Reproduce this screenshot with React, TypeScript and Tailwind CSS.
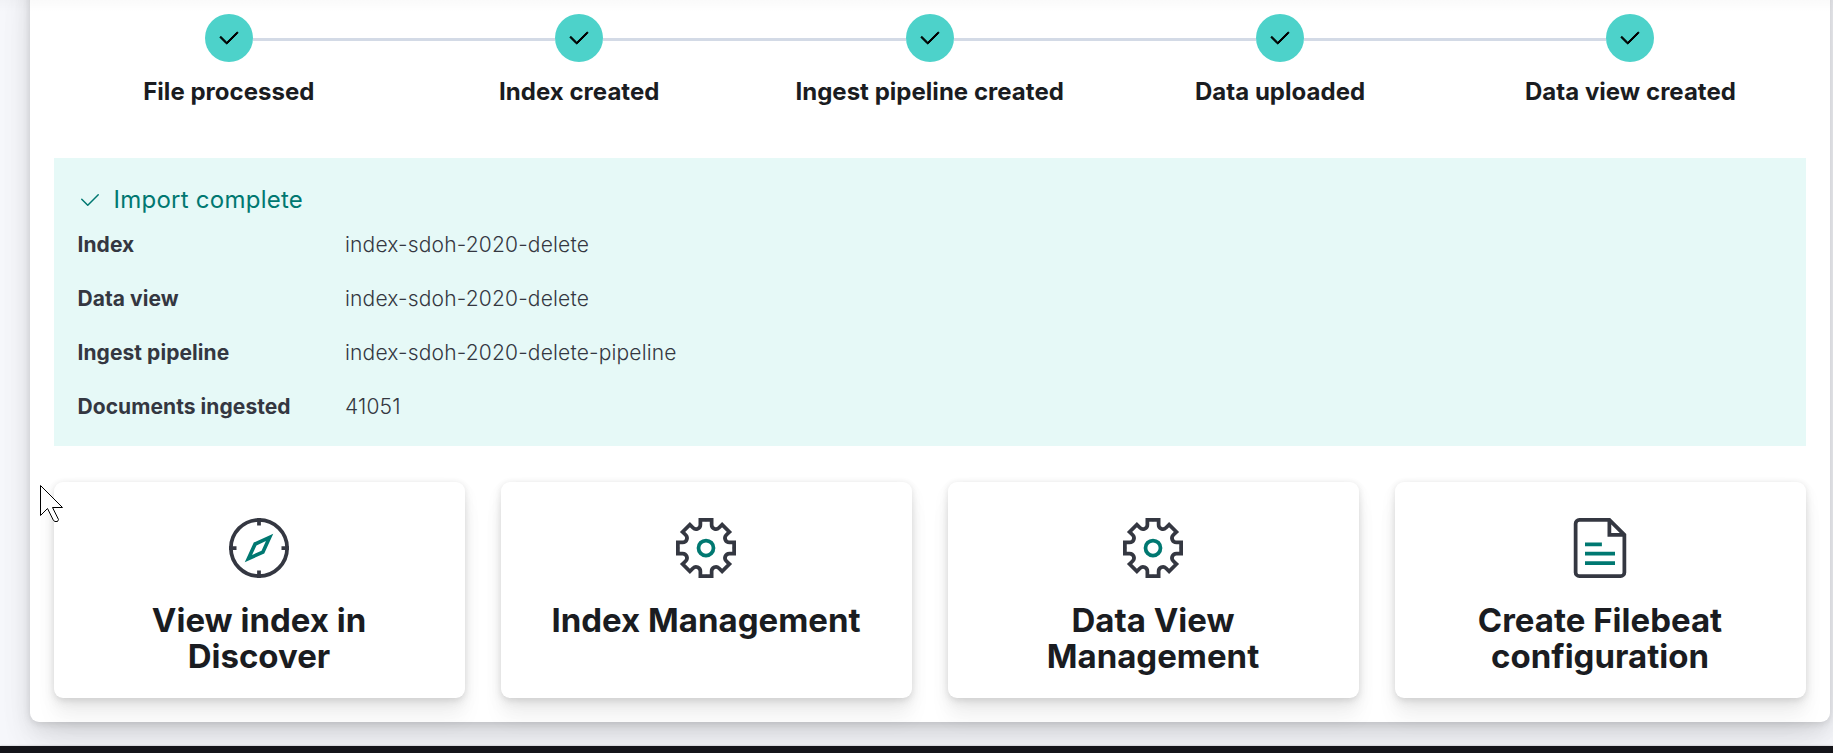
import React from "react";

const steps = ["File processed", "Index created", "Ingest pipeline created", "Data uploaded", "Data view created"];

const results = [
  ["Index", "index-sdoh-2020-delete"],
  ["Data view", "index-sdoh-2020-delete"],
  ["Ingest pipeline", "index-sdoh-2020-delete-pipeline"],
  ["Documents ingested", "41051"],
];

function Check({ bold = false }: { bold?: boolean }) {
  return (
    <svg className="size-6 shrink-0" viewBox="0 0 16 16" fill="currentColor" stroke={bold ? "currentColor" : "none"} strokeWidth="0.65">
      <path d="M6.5 12a.502.502 0 0 1-.354-.146l-4-4a.502.502 0 0 1 .708-.708L6.5 10.793l6.646-6.647a.502.502 0 0 1 .708.708l-7 7A.502.502 0 0 1 6.5 12" />
    </svg>
  );
}

function Compass() {
  return (
    <svg className="size-[60px]" viewBox="0 0 32 32" fill="none">
      <circle cx="16" cy="16" r="15" stroke="#343741" strokeWidth="2" />
      <path d="M16 0v4M16 28v4M0 16h4M28 16h4" stroke="#343741" strokeWidth="2" />
      <path
        fill="#007871"
        fillRule="evenodd"
        d="M23.6 8.4 13.2 13.1 8.4 23.6 18.8 18.9ZM19.7 12.3 14.65 14.6 12.3 19.7 17.35 17.4Z"
      />
    </svg>
  );
}

function Gear() {
  const quarter = "M16.1 1H13V3.55A2.3 2.3 0 0 1 9.07 5.18L7.4 3.5 3.5 7.4 5.18 9.07A2.3 2.3 0 0 1 3.55 13H1V16.1";
  return (
    <svg className="size-[60px]" viewBox="0 0 32 32" fill="none" strokeWidth="2">
      {[0, 90, 180, 270].map((angle) => (
        <path key={angle} d={quarter} stroke="#343741" transform={`rotate(${angle} 16 16)`} />
      ))}
      <circle cx="16" cy="16" r="4" stroke="#007871" />
    </svg>
  );
}

function Document() {
  return (
    <svg className="size-[60px]" viewBox="0 0 32 32" fill="none" strokeWidth="2">
      <path d="M21 1H5a2 2 0 0 0-2 2v26a2 2 0 0 0 2 2h22a2 2 0 0 0 2-2V9L21 1v8h8" stroke="#343741" />
      <path d="M8 14h9M8 19h16M8 24h16" stroke="#007871" />
    </svg>
  );
}

const cards = [
  { title: "View index in Discover", icon: <Compass /> },
  { title: "Index Management", icon: <Gear /> },
  { title: "Data View Management", icon: <Gear /> },
  { title: "Create Filebeat configuration", icon: <Document /> },
];

export default function App() {
  return (
    <div className="relative flex h-[753px] w-[1833px] flex-col overflow-hidden bg-[#f7f8fc] font-['Inter',sans-serif] text-[#343741]">
      <main className="-mt-12 ml-[30px] flex h-[770px] w-[1800px] shrink-0 flex-col rounded-[9px] bg-white px-6 pt-[62px] shadow-[0_1.5px_7.5px_rgba(0,0,0,0.1),0_5.4px_19.5px_rgba(0,0,0,0.07),0_12.6px_34.5px_rgba(0,0,0,0.06),0_34.5px_52.5px_rgba(0,0,0,0.05)]">
        <ol className="mr-[0.35px] -ml-[0.35px] grid h-[144px] grid-cols-5">
          {steps.map((step, i) => (
            <li key={step} className="flex flex-col items-center">
              <div className="flex w-full items-center">
                <span className={i === 0 ? "mt-[3px] h-[3px] flex-1" : "mt-[3px] h-[3px] flex-1 bg-[#d3dae6]"} />
                <span className="flex size-12 items-center justify-center rounded-full bg-[#4dd2ca] text-black">
                  <Check bold />
                </span>
                <span className={i === steps.length - 1 ? "mt-[3px] h-[3px] flex-1" : "mt-[3px] h-[3px] flex-1 bg-[#d3dae6]"} />
              </div>
              <p className="mt-3 text-2xl leading-9 font-bold tracking-[0.03px] whitespace-nowrap text-[#1a1c21]">{step}</p>
            </li>
          ))}
        </ol>

        <section className="h-72 bg-[#e6f9f7] p-6">
          <h2 className="flex items-center gap-[11.5px] text-2xl leading-9 tracking-[0.25px] text-[#007871]">
            <Check />
            Import complete
          </h2>
          <dl className="mt-3 grid grid-cols-[267px_1fr] gap-y-6 text-[21px] leading-[30px]">
            {results.map(([label, value]) => (
              <React.Fragment key={label}>
                <dt className="-ml-[0.5px] font-bold tracking-[0.06px]">{label}</dt>
                <dd className="font-light tracking-[0.17px]">{value}</dd>
              </React.Fragment>
            ))}
          </dl>
        </section>

        <section className="mt-9 grid grid-cols-4 gap-9">
          {cards.map((card) => (
            <article
              key={card.title}
              className="flex h-[216px] flex-col items-center rounded-[9px] bg-white px-9 pt-9 shadow-[0_1.4px_6px_rgba(0,0,0,0.08),0_3.9px_12px_rgba(0,0,0,0.06),0_8.6px_18px_rgba(0,0,0,0.05),0_22.5px_22.5px_rgba(0,0,0,0.04)]"
            >
              <div className="mr-px">{card.icon}</div>
              <h3 className="mt-6 mr-px max-w-[310px] text-center text-[33px] leading-9 font-bold text-[#1a1c21]">{card.title}</h3>
            </article>
          ))}
        </section>
      </main>
      <footer className="relative mt-6 h-[7px] shrink-0 bg-[#141419] shadow-[0_0_2px_rgba(0,0,0,0.3)]" />

      <div className="absolute inset-x-0 top-0 h-3 bg-linear-to-b from-black/2 to-transparent" />
      <svg className="absolute top-[485px] left-10 h-10 w-6" viewBox="0 0 24 40" fill="white" stroke="black">
        <path d="M.5.5V30.5L7.5 23.5 13.5 35.5 15 36.5 17.5 36.5 18.5 34.5 12.5 22.5H22.5Z" />
      </svg>
    </div>
  );
}
